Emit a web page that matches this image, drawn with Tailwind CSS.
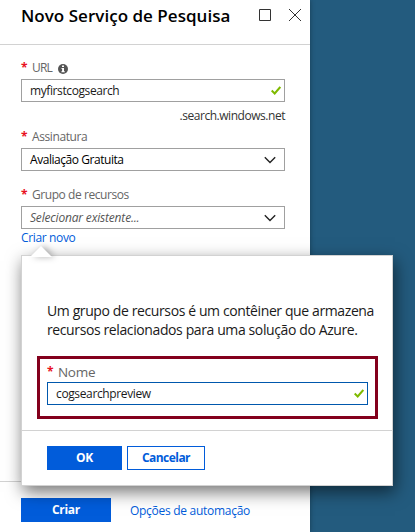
<!DOCTYPE html>
<html lang="pt">
<head>
<meta charset="utf-8">
<title>Novo Serviço de Pesquisa</title>
<script src="https://cdn.jsdelivr.net/npm/@tailwindcss/browser@4"></script>
</head>
<body class="w-[415px] h-[532px] overflow-hidden bg-[#235b7e] font-['Open_Sans','Noto_Sans',sans-serif] text-[12px] text-black whitespace-nowrap">
<main class="relative w-[310px] h-[532px] bg-white flex flex-col shadow-[0_0_5px_rgba(0,0,0,0.35)]">
  <header class="h-[45px] shrink-0 border-b border-[#d2d2d2] flex items-start pl-[21px] pr-[8px]">
    <h1 class="text-[17px] leading-[31px] font-semibold tracking-[0.03px]">Novo Serviço de Pesquisa</h1>
    <div class="ml-auto mt-[8px] flex gap-[17px]">
      <svg class="w-[13px] h-[13px]" viewBox="0 0 13 13" fill="none" stroke="#333"><path d="M1.5 1.5h11v11h-11z"/></svg>
      <svg class="w-[14px] h-[14px]" viewBox="0 0 14 14" fill="none" stroke="#333"><path d="M1 1l12 12M13 1L1 13"/></svg>
    </div>
  </header>

  <form class="flex-1 px-[21px] pt-[12px] pr-[25px]">
    <label class="h-[22px] flex items-center text-[#666]">
      <span class="w-[11px] text-[12px] font-bold text-[#e81123]">*</span><span class="tracking-[-0.8px]">URL</span>
      <svg class="ml-[6px] mt-[2px] w-[10px] h-[10px]" viewBox="0 0 10 10"><circle cx="5" cy="5" r="5" fill="#555"/><path d="M4 1.5h2v1.4H4zM3.5 4H6v3.2h.8v1H3.4v-1h.7V5h-.6z" fill="#fff"/></svg>
    </label>
    <div class="h-[23px] border border-[#a0a0a0] flex items-center pl-[8px] pr-[3px] text-[#1a1a1a]">
      <span class="tracking-[-0.4px]">myfirstcogsearch</span>
      <svg class="ml-auto w-[10px] h-[9px]" viewBox="0 0 10 9" fill="none" stroke="#7fba00" stroke-width="2"><path d="M.7 4.5l3 3L9.3 1"/></svg>
    </div>
    <div class="h-[24px] pt-[4px] flex items-center justify-end text-[#333]"><span class="tracking-[-0.46px]">.search.windows.net</span></div>

    <label class="h-[22px] flex items-center text-[#666]">
      <span class="w-[11px] text-[12px] font-bold text-[#e81123]">*</span><span class="tracking-[-0.4px]">Assinatura</span>
    </label>
    <div class="h-[23px] border border-[#a0a0a0] flex items-center pl-[8px] pr-[8px]">
      <span class="tracking-[-0.45px]">Avaliação Gratuita</span>
      <svg class="ml-auto w-[12px] h-[8px]" viewBox="0 0 12 8" fill="none" stroke="#222" stroke-width="1.4"><path d="M.8 1.3L6 6.5l5.2-5.2"/></svg>
    </div>

    <label class="mt-[13px] h-[22px] flex items-center text-[#666]">
      <span class="w-[11px] text-[12px] font-bold text-[#e81123]">*</span><span class="tracking-[-0.43px]">Grupo de recursos</span>
    </label>
    <div class="h-[23px] border border-[#a0a0a0] flex items-center pl-[8px] pr-[8px]">
      <span class="tracking-[-0.18px] italic text-[#555]">Selecionar existente...</span>
      <svg class="ml-auto w-[12px] h-[8px]" viewBox="0 0 12 8" fill="none" stroke="#222" stroke-width="1.4"><path d="M.8 1.3L6 6.5l5.2-5.2"/></svg>
    </div>
    <a class="h-[18px] flex items-center text-[#015cda]"><span class="tracking-[-0.35px]">Criar novo</span></a>
  </form>

  <footer class="h-[51px] shrink-0 border-t border-[#d2d2d2] pt-[16px] pl-[21px] flex items-start">
    <button class="w-[90px] h-[24px] bg-[#015cda] text-white font-bold"><span class="tracking-[-0.3px]">Criar</span></button>
    <a class="ml-[19px] h-[24px] flex items-center text-[#015cda] pt-[2px]"><span class="tracking-[-0.28px]">Opções de automação</span></a>
  </footer>

  <section class="absolute left-[21px] top-[255px] w-[372px] h-[231px] bg-white border border-[#d2d2d2] shadow-[2px_6px_16px_rgba(0,0,0,0.55)] flex flex-col">
    <svg class="absolute left-[8px] top-[-10px] w-[22px] h-[11px] drop-shadow-[3px_0_3px_rgba(0,0,0,0.3)]" viewBox="0 0 22 11"><path d="M0 11L11 0l11 11z" fill="#fff"/></svg>
    <p class="relative mt-[45px] pl-[25px] text-[14px] leading-[19px] text-[#1a1a1a]"><span class="tracking-[-0.39px]">Um grupo de recursos é um contêiner que armazena</span><br><span class="tracking-[-0.39px]">recursos relacionados para uma solução do Azure.</span></p>
    <div class="mt-[17px] ml-[15px] w-[341px] h-[63px] border-3 border-[#83001c] px-[7px] pt-[3px]">
      <label class="h-[20px] flex items-center text-[#666]">
        <span class="w-[11px] text-[12px] font-bold text-[#e81123]">*</span><span class="text-[13.5px] tracking-[-0.3px]">Nome</span>
      </label>
      <div class="h-[23px] w-[321px] border border-[#0058ad] flex items-center pl-[8px] pr-[3px] text-[#1a1a1a]">
        <span class="tracking-[-0.37px]">cogsearchpreview</span>
        <svg class="ml-auto w-[10px] h-[9px]" viewBox="0 0 10 9" fill="none" stroke="#7fba00" stroke-width="2"><path d="M.7 4.5l3 3L9.3 1"/></svg>
      </div>
    </div>
    <div class="mt-auto h-[55px] border-t border-[#d2d2d2] pt-[15px] pl-[25px] flex gap-[5px]">
      <button class="w-[75px] h-[24px] bg-[#015cda] text-white font-bold"><span class="tracking-[-0.2px]">OK</span></button>
      <button class="w-[78px] h-[24px] border border-[#015cda] text-[#015cda] font-bold"><span class="tracking-[-0.55px]">Cancelar</span></button>
    </div>
  </section>
</main>
</body>
</html>
